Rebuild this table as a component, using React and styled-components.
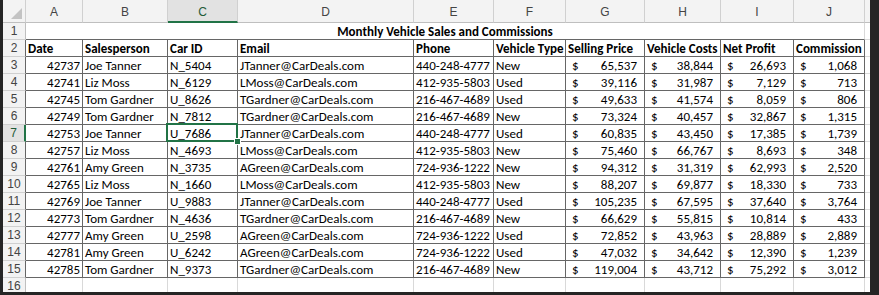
import React from "react";
import styled, { createGlobalStyle, css } from "styled-components";

const GRID = "#d9d9d9";
const LINE = "#666666";
const HEAD_BG = "#f3f3f3";
const HEAD_LINE = "#d0d0d0";
const GREEN = "#217346";

const GlobalStyle = createGlobalStyle`
  html, body {
    margin: 0;
    padding: 0;
    background: #252525;
  }
  body {
    font-family: Carlito, Lato, "Liberation Sans", sans-serif;
  }
`;

const Frame = styled.div`
  width: 879px;
  height: 295px;
  box-sizing: border-box;
  padding: 0 9px 3px 3px;
  background: #252525;
`;

const Sheet = styled.div`
  height: 100%;
  overflow: hidden;
  background: #ffffff;
  display: grid;
  grid-template-columns: 23px 57px 85px 70px 176px 80px 72px 79px 76px 73px 71px 1fr;
  grid-template-rows: 23px;
  grid-auto-rows: 17px;
  font-size: 13px;
  color: #000;
`;

const Corner = styled.div`
  position: relative;
  background: ${HEAD_BG};
  border-right: 1px solid ${HEAD_LINE};
  border-bottom: 1px solid #bfbfbf;
  box-sizing: border-box;

  &::after {
    content: "";
    position: absolute;
    right: 3px;
    bottom: 3px;
    width: 0;
    height: 0;
    border-left: 11px solid transparent;
    border-bottom: 11px solid #c3c3c3;
  }
`;

const ColHead = styled.div`
  display: flex;
  align-items: center;
  justify-content: center;
  box-sizing: border-box;
  background: ${({ $active }) => ($active ? "#e2e2e2" : HEAD_BG)};
  border-right: 1px solid ${HEAD_LINE};
  border-bottom: ${({ $active }) => ($active ? `2px solid ${GREEN}` : "1px solid #bfbfbf")};
  color: ${({ $active }) => ($active ? "#1e5b38" : "#444")};
  font-family: "Liberation Sans", Arial, sans-serif;
  font-size: 12px;
  padding-top: 2px;
`;

const RowHead = styled.div`
  display: flex;
  align-items: center;
  justify-content: center;
  box-sizing: border-box;
  background: ${({ $active }) => ($active ? "#e2e2e2" : HEAD_BG)};
  border-bottom: 1px solid ${HEAD_LINE};
  border-right: ${({ $active, $dark }) =>
    $active ? `2px solid ${GREEN}` : `1px solid ${$dark ? LINE : "#bfbfbf"}`};
  color: ${({ $active }) => ($active ? "#1e5b38" : "#444")};
  font-family: "Liberation Sans", Arial, sans-serif;
  font-size: 12px;
`;

const Cell = styled.div`
  position: relative;
  display: flex;
  align-items: center;
  box-sizing: border-box;
  white-space: nowrap;
  overflow: visible;
  padding: 0 2px;
  justify-content: ${({ $align }) => ($align === "right" ? "flex-end" : "flex-start")};
  font-weight: ${({ $bold }) => ($bold ? 700 : 400)};
  border-right: 1px solid ${({ $dark }) => ($dark ? LINE : GRID)};
  border-bottom: 1px solid ${({ $dark }) => ($dark ? LINE : GRID)};

  ${({ $selected }) =>
    $selected &&
    css`
      &::before {
        content: "";
        position: absolute;
        inset: -2px -1px -1px -2px;
        border: 2px solid ${GREEN};
        pointer-events: none;
      }
      &::after {
        content: "";
        position: absolute;
        right: -4px;
        bottom: -4px;
        width: 5px;
        height: 5px;
        background: ${GREEN};
        border: 1px solid #fff;
        z-index: 2;
      }
    `}
`;

const Money = styled(Cell)`
  justify-content: space-between;
  padding: 0 7px 0 6px;
`;

const Title = styled(Cell)`
  grid-column: span 10;
  justify-content: center;
  font-weight: 700;
  border-right: 1px solid ${GRID};
  border-bottom: 1px solid ${LINE};
`;

const Filler = styled.div`
  border-bottom: 1px solid ${GRID};
  box-sizing: border-box;
`;

const FillerHead = styled.div`
  background: ${HEAD_BG};
  border-bottom: 1px solid #bfbfbf;
  box-sizing: border-box;
`;

const letters = ["A", "B", "C", "D", "E", "F", "G", "H", "I", "J"];
const headers = [
  "Date",
  "Salesperson",
  "Car ID",
  "Email",
  "Phone",
  "Vehicle Type",
  "Selling Price",
  "Vehicle Costs",
  "Net Profit",
  "Commission",
];

const people = {
  joe: ["Joe Tanner", "JTanner@CarDeals.com", "440-248-4777"],
  liz: ["Liz Moss", "LMoss@CarDeals.com", "412-935-5803"],
  tom: ["Tom Gardner", "TGardner@CarDeals.com", "216-467-4689"],
  amy: ["Amy Green", "AGreen@CarDeals.com", "724-936-1222"],
};

const sales = [
  [42737, "joe", "N_5404", "New", "65,537", "38,844", "26,693", "1,068"],
  [42741, "liz", "N_6129", "Used", "39,116", "31,987", "7,129", "713"],
  [42745, "tom", "U_8626", "Used", "49,633", "41,574", "8,059", "806"],
  [42749, "tom", "N_7812", "New", "73,324", "40,457", "32,867", "1,315"],
  [42753, "joe", "U_7686", "Used", "60,835", "43,450", "17,385", "1,739"],
  [42757, "liz", "N_4693", "New", "75,460", "66,767", "8,693", "348"],
  [42761, "amy", "N_3735", "New", "94,312", "31,319", "62,993", "2,520"],
  [42765, "liz", "N_1660", "New", "88,207", "69,877", "18,330", "733"],
  [42769, "joe", "U_9883", "Used", "105,235", "67,595", "37,640", "3,764"],
  [42773, "tom", "N_4636", "New", "66,629", "55,815", "10,814", "433"],
  [42777, "amy", "U_2598", "Used", "72,852", "43,963", "28,889", "2,889"],
  [42781, "amy", "U_6242", "Used", "47,032", "34,642", "12,390", "1,239"],
  [42785, "tom", "N_9373", "New", "119,004", "43,712", "75,292", "3,012"],
];

const SELECTED_ROW = 7;

const App = () => (
  <Frame>
    <GlobalStyle />
    <Sheet>
      <Corner />
      {letters.map((l) => (
        <ColHead key={l} $active={l === "C"}>
          {l}
        </ColHead>
      ))}
      <FillerHead />

      <RowHead>1</RowHead>
      <Title>Monthly Vehicle Sales and Commissions</Title>
      <Filler />

      <RowHead $dark>2</RowHead>
      {headers.map((h) => (
        <Cell key={h} $bold $dark>
          {h}
        </Cell>
      ))}
      <Filler />

      {sales.map((s, i) => {
        const row = i + 3;
        const [name, email, phone] = people[s[1]];
        return (
          <React.Fragment key={row}>
            <RowHead $dark $active={row === SELECTED_ROW}>
              {row}
            </RowHead>
            <Cell $dark $align="right">{s[0]}</Cell>
            <Cell $dark>{name}</Cell>
            <Cell $dark $selected={row === SELECTED_ROW}>{s[2]}</Cell>
            <Cell $dark>{email}</Cell>
            <Cell $dark>{phone}</Cell>
            <Cell $dark>{s[3]}</Cell>
            {s.slice(4).map((v, j) => (
              <Money key={j} $dark>
                <span>$</span>
                <span>{v}</span>
              </Money>
            ))}
            <Filler />
          </React.Fragment>
        );
      })}

      <RowHead>16</RowHead>
      {letters.map((l) => (
        <Cell key={l} />
      ))}
      <Filler />
    </Sheet>
  </Frame>
);

export default App;
